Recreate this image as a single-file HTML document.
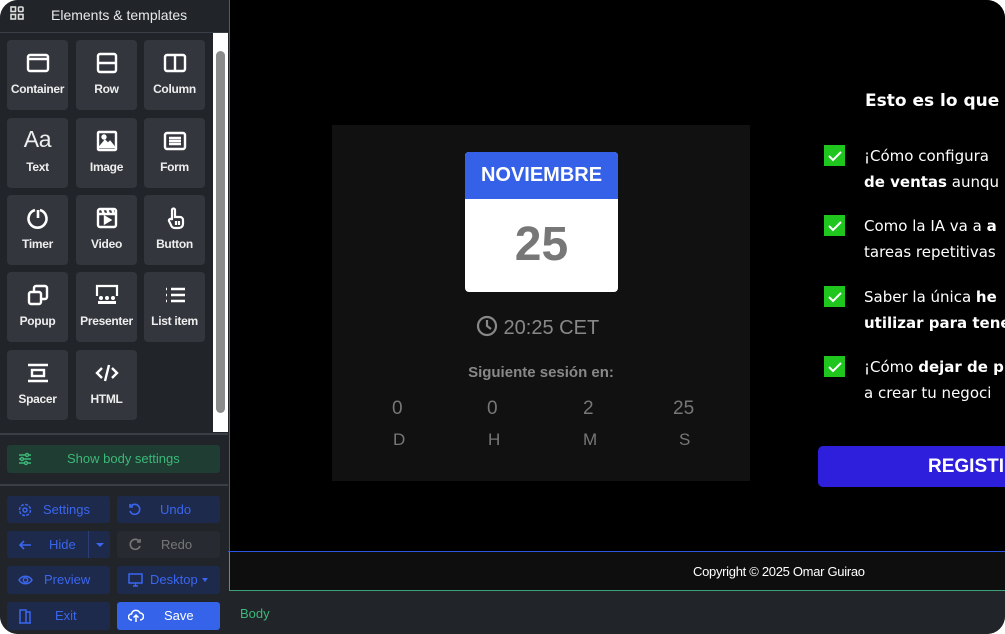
<!DOCTYPE html>
<html><head><meta charset="utf-8"><style>
*{box-sizing:border-box;margin:0;padding:0}
html,body{width:1005px;height:634px;background:#fff;overflow:hidden;font-family:"Liberation Sans",sans-serif}
#app{position:absolute;left:0;top:0;width:1005px;height:634px;border-radius:18px;overflow:hidden;background:#212429}
#side{position:absolute;left:0;top:0;width:228px;height:634px;background:#212429}
#hdr{position:absolute;left:0;top:0;width:228px;height:33px;border-bottom:1px solid #3a3f47;color:#e8e8e8;font-size:14px}
#hdr span{position:absolute;left:51px;top:7px}
#grid{position:absolute;left:0;top:33px;width:213px;height:399px;background:#212429}
.t{position:absolute;width:61px;height:70px;background:#33363c;border-radius:4px;color:#eee;font-size:12px;font-weight:bold;text-align:center}
.t svg{position:absolute;left:19px;top:11px}
.t span{position:absolute;left:-3px;right:-3px;top:42px;letter-spacing:-.3px}
#sb{position:absolute;left:213px;top:33px;width:15px;height:399px;background:#fff}
#sb i{position:absolute;left:3px;top:18px;width:9px;height:362px;background:#8b8b8b;border-radius:5px}
.sep{position:absolute;left:0;width:228px;height:2px;background:#3a3e45}
.b{position:absolute;width:103px;height:27px;background:#1e2a4c;border-radius:3px;color:#3a66ee;font-size:13px}
.b svg{position:absolute;left:11px;top:7px}
.b span{position:absolute;top:6px}
#canvas{position:absolute;left:229px;top:0;width:776px;height:552px;background:#000;border-left:1px solid #2b56e0}
#blu{position:absolute;left:228px;top:551px;width:777px;height:1px;background:#2b56e0}
#foot{position:absolute;left:229px;top:552px;width:776px;height:39px;background:#0e0e0e;color:#fff;font-size:13px;border-bottom:1px solid #3ba27a;border-left:1px solid #3ba27a}
#bodybar{position:absolute;left:229px;top:592px;width:776px;height:42px;background:#212429;color:#3cb878;font-size:13px}
.li{position:absolute;left:824px;color:#fff;font-family:"DejaVu Sans",sans-serif;font-size:15px;line-height:26px;white-space:nowrap}
.ck{position:absolute;left:824px;width:21px;height:21px;background:#1ec61e}
</style></head><body><div id="app">
<div id="side">
<div id="hdr"><svg style="position:absolute;left:10px;top:6px" width="14" height="14" viewBox="0 0 14 14" fill="none" stroke="#ddd" stroke-width="1.6"><rect x="1" y="1" width="4.5" height="4.5"/><rect x="8.5" y="1" width="4.5" height="4.5" rx="1"/><rect x="1" y="8.5" width="4.5" height="4.5"/><rect x="8.5" y="8.5" width="4.5" height="4.5"/></svg><span>Elements &amp; templates</span></div>
<div id="grid">
<div class="t" style="left:7px;top:7px"><svg width="24" height="24" viewBox="0 0 24 24" fill="none" stroke="#fff" stroke-width="2.4"><rect x="2" y="4" width="20" height="16" rx="2"/><line x1="2" y1="8" x2="22" y2="8"/></svg><span>Container</span></div>
<div class="t" style="left:76px;top:7px"><svg width="24" height="24" viewBox="0 0 24 24" fill="none" stroke="#fff" stroke-width="2.4"><rect x="3" y="3" width="18" height="18" rx="2"/><line x1="3" y1="12" x2="21" y2="12"/></svg><span>Row</span></div>
<div class="t" style="left:144px;top:7px"><svg width="24" height="24" viewBox="0 0 24 24" fill="none" stroke="#fff" stroke-width="2.4"><rect x="2" y="4" width="20" height="16" rx="2"/><line x1="12" y1="4" x2="12" y2="20"/></svg><span>Column</span></div>
<div class="t" style="left:7px;top:85px"><span style="top:8px;font-size:23px;font-weight:normal">Aa</span><span>Text</span></div>
<div class="t" style="left:76px;top:85px"><svg width="24" height="24" viewBox="0 0 24 24" fill="none" stroke="#fff" stroke-width="2.4"><rect x="3" y="3" width="18" height="18" rx="1"/><path d="M5 18l5-6 3 3 2-2 4 5z" fill="#fff"/><circle cx="9" cy="8" r="1.5" fill="#fff"/></svg><span>Image</span></div>
<div class="t" style="left:144px;top:85px"><svg width="24" height="24" viewBox="0 0 24 24" fill="none" stroke="#fff" stroke-width="2.4"><rect x="2" y="4" width="20" height="16" rx="2"/><path d="M6 9h12M6 12h12M6 15h12"/></svg><span>Form</span></div>
<div class="t" style="left:7px;top:162px"><svg width="24" height="24" viewBox="0 0 24 24" fill="none" stroke="#fff" stroke-width="2.6"><path d="M9 4a9 9 0 1 0 5 0"/><path d="M12 4l0 8"/></svg><span>Timer</span></div>
<div class="t" style="left:76px;top:162px"><svg width="24" height="24" viewBox="0 0 24 24" fill="none" stroke="#fff" stroke-width="2.4"><rect x="3" y="3" width="18" height="18" rx="2"/><path d="M3 8h18M7 3l2 5M12 3l2 5M17 3l2 5"/><path d="M10 11v6l5-3z" fill="#fff"/></svg><span>Video</span></div>
<div class="t" style="left:144px;top:162px"><svg width="24" height="24" viewBox="0 0 24 24" fill="none" stroke="#fff" stroke-width="2.2"><path d="M9 13V4a1.5 1.5 0 0 1 3 0v7h5a3 3 0 0 1 3 3v4a4 4 0 0 1-4 4h-4a4 4 0 0 1-4-3l-2-4a1.5 1.5 0 0 1 3-1z"/><path d="M13 15v4M16 15v4"/></svg><span>Button</span></div>
<div class="t" style="left:7px;top:239px"><svg width="24" height="24" viewBox="0 0 24 24" fill="none" stroke="#fff" stroke-width="2.4"><rect x="3" y="9" width="12" height="12" rx="2"/><path d="M8 9V5a2 2 0 0 1 2-2h9a2 2 0 0 1 2 2v9a2 2 0 0 1-2 2h-4"/></svg><span>Popup</span></div>
<div class="t" style="left:76px;top:239px"><svg width="24" height="24" viewBox="0 0 24 24" fill="none" stroke="#fff" stroke-width="2.2"><path d="M2 13V3h20v10"/><g fill="#fff" stroke="none"><circle cx="6" cy="15" r="2"/><circle cx="12" cy="15" r="2"/><circle cx="18" cy="15" r="2"/><rect x="3" y="18" width="6" height="3"/><rect x="9" y="18" width="6" height="3"/><rect x="15" y="18" width="6" height="3"/></g></svg><span>Presenter</span></div>
<div class="t" style="left:144px;top:239px"><svg width="24" height="24" viewBox="0 0 24 24" fill="none" stroke="#fff" stroke-width="2.4"><path d="M8 6h14M8 12h14M8 18h14M3 6h1M3 12h1M3 18h1"/></svg><span>List item</span></div>
<div class="t" style="left:7px;top:317px"><svg width="24" height="24" viewBox="0 0 24 24" fill="none" stroke="#fff" stroke-width="2.4"><path d="M2 4h20M2 20h20"/><rect x="6" y="9" width="12" height="6"/></svg><span>Spacer</span></div>
<div class="t" style="left:76px;top:317px"><svg width="24" height="24" viewBox="0 0 24 24" fill="none" stroke="#fff" stroke-width="2.4"><path d="M7 7l-5 5 5 5M17 7l5 5-5 5M14 4l-4 16"/></svg><span>HTML</span></div>
</div>
<div id="sb"><i></i></div>
<div class="sep" style="top:433px"></div>
<div style="position:absolute;left:7px;top:445px;width:213px;height:28px;background:#1f3d33;border-radius:3px;color:#3cb878;font-size:13px"><svg style="position:absolute;left:11px;top:7px" width="14" height="14" viewBox="0 0 14 14" fill="none" stroke="#3cb878" stroke-width="1.4"><path d="M1 3h12M1 7h12M1 11h12"/><circle cx="9" cy="3" r="1.5" fill="#1f3d33"/><circle cx="4" cy="7" r="1.5" fill="#1f3d33"/><circle cx="8" cy="11" r="1.5" fill="#1f3d33"/></svg><span style="position:absolute;left:60px;top:6px">Show body settings</span></div>
<div class="sep" style="top:484px"></div>
<div class="b" style="left:7px;top:496px"><svg width="14" height="14" viewBox="0 0 14 14" fill="none" stroke="#3a66ee" stroke-width="1.5"><circle cx="7" cy="7" r="2"/><circle cx="7" cy="7" r="5.5" stroke-dasharray="3 1.3"/></svg><span style="left:36px">Settings</span></div>
<div class="b" style="left:117px;top:496px"><svg width="14" height="14" viewBox="0 0 14 14" fill="none" stroke="#3a66ee" stroke-width="1.6"><path d="M3 3a5 5 0 1 1-1 5"/><path d="M2 1v3h3"/></svg><span style="left:43px">Undo</span></div>
<div class="b" style="left:7px;top:531px"><svg width="14" height="14" viewBox="0 0 14 14" fill="none" stroke="#3a66ee" stroke-width="1.6"><path d="M13 7H2M6 3L2 7l4 4"/></svg><span style="left:42px">Hide</span><i style="position:absolute;left:81px;top:0;width:1px;height:27px;background:#2c3d73"></i><i style="position:absolute;left:89px;top:12px;border:4px solid transparent;border-top:4px solid #3a66ee;border-bottom:0"></i></div>
<div class="b" style="left:117px;top:531px;background:#272b31;color:#777"><svg width="14" height="14" viewBox="0 0 14 14" fill="none" stroke="#777" stroke-width="1.6"><path d="M11 3a5 5 0 1 0 1 5"/><path d="M12 1v3h-3"/></svg><span style="left:44px">Redo</span></div>
<div class="b" style="left:7px;top:566px;height:28px"><svg width="15" height="14" viewBox="0 0 15 14" fill="none" stroke="#3a66ee" stroke-width="1.5"><path d="M1 7c3-5 10-5 13 0-3 5-10 5-13 0z"/><circle cx="7.5" cy="7" r="2.2"/></svg><span style="left:37px">Preview</span></div>
<div class="b" style="left:117px;top:566px;height:28px"><svg width="15" height="14" viewBox="0 0 15 14" fill="none" stroke="#3a66ee" stroke-width="1.5"><rect x="1" y="1" width="13" height="9"/><path d="M5 13h5M7.5 10v3"/></svg><span style="left:33px">Desktop</span><i style="position:absolute;left:85px;top:12px;border:3.5px solid transparent;border-top:4px solid #3a66ee;border-bottom:0"></i></div>
<div class="b" style="left:7px;top:602px;height:28px"><svg width="14" height="15" viewBox="0 0 14 15" fill="none" stroke="#3a66ee" stroke-width="1.5"><path d="M2 14V1h6v13M8 3h4v11M1 14h12"/></svg><span style="left:48px">Exit</span></div>
<div class="b" style="left:117px;top:602px;height:28px;background:#3563e9;color:#fff"><svg width="16" height="14" viewBox="0 0 16 14" fill="none" stroke="#fff" stroke-width="1.5"><path d="M4 11H3.5a3 3 0 0 1 0-6 4.5 4.5 0 0 1 8.5-1 3.5 3.5 0 0 1 0 7H12"/><path d="M8 13V6M5.5 8.5L8 6l2.5 2.5"/></svg><span style="left:47px">Save</span></div>
</div>
<div id="canvas">
<div style="position:absolute;left:102px;top:125px;width:418px;height:356px;background:#111"></div>
<div style="position:absolute;left:235px;top:152px;width:153px;height:140px;background:#fff;border-radius:4px;overflow:hidden">
<div style="height:47px;background:#3561e9;color:#fff;font-weight:bold;font-size:20px;text-align:center;line-height:46px">NOVIEMBRE</div>
<div style="text-align:center;color:#777;font-weight:bold;font-size:48px;line-height:92px">25</div></div>
<div style="position:absolute;left:246px;top:315px;color:#888;font-size:20px"><svg style="vertical-align:-3px" width="22" height="22" viewBox="0 0 22 22" fill="none" stroke="#888" stroke-width="2.2"><circle cx="11" cy="11" r="9"/><path d="M11 5v6l4 3"/></svg> 20:25 CET</div>
<div style="position:absolute;left:102px;top:364px;width:418px;text-align:center;color:#888;font-weight:bold;font-size:15px">Siguiente sesión en:</div>
<div style="position:absolute;left:102px;top:398px;width:418px;color:#777;font-size:19px">
<span style="position:absolute;left:60px">0</span><span style="position:absolute;left:155px">0</span><span style="position:absolute;left:251px">2</span><span style="position:absolute;left:341px">25</span></div>
<div style="position:absolute;left:102px;top:430px;width:418px;color:#777;font-size:17px">
<span style="position:absolute;left:61px">D</span><span style="position:absolute;left:156px">H</span><span style="position:absolute;left:251px">M</span><span style="position:absolute;left:347px">S</span></div>
</div>
<div style="position:absolute;left:865px;top:91px;color:#fff;font-weight:bold;font-size:17px;font-family:'DejaVu Sans',sans-serif">Esto es lo que</div>
<div class="ck" style="top:145px"></div><div class="ck" style="top:215px"></div><div class="ck" style="top:286px"></div><div class="ck" style="top:356px"></div>
<svg style="position:absolute;left:824px;top:145px" width="21" height="232" viewBox="0 0 21 232" fill="none" stroke="#fff" stroke-width="2"><path d="M5 11l4 4 8-8M5 81l4 4 8-8M5 152l4 4 8-8M5 222l4 4 8-8"/></svg>
<div class="li" style="left:864px;top:143px">¡Cómo configura<br><b>de ventas</b> aunqu</div>
<div class="li" style="left:864px;top:213px">Como la IA va a <b>a</b><br>tareas repetitivas</div>
<div class="li" style="left:864px;top:284px">Saber la única <b>he</b><br><b>utilizar para tene</b></div>
<div class="li" style="left:864px;top:354px">¡Cómo <b>dejar de p</b><br>a crear tu negoci</div>
<div style="position:absolute;left:818px;top:446px;width:200px;height:41px;background:#2e1fdc;border-radius:5px;color:#fff;font-weight:bold;font-size:19px;line-height:41px;padding-left:110px">REGISTI</div>
<div id="blu"></div>
<div id="foot"><span style="position:absolute;left:463px;top:12px;letter-spacing:-.3px">Copyright © 2025 Omar Guirao</span></div>
<div id="bodybar"><span style="position:absolute;left:11px;top:14px">Body</span></div>
</div></body></html>
